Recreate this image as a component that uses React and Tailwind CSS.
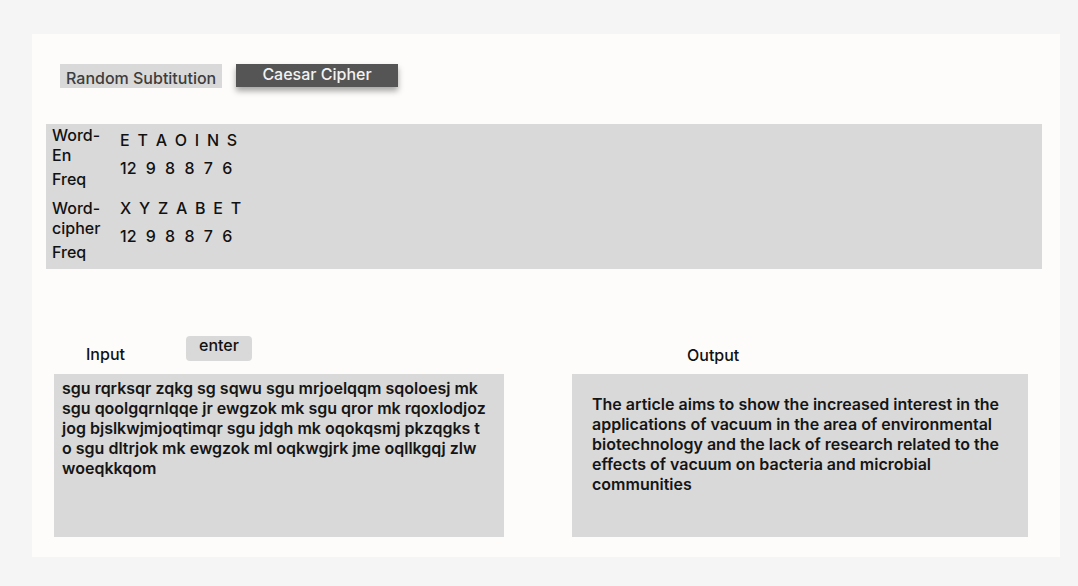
export default function App() {
  return (
    <div className="min-h-[586px] bg-[#f5f5f5] pt-[34px] pl-[32px]" style={{ fontFamily: "Inter, 'Noto Sans', sans-serif" }}>
      <div className="w-[1028px] h-[523px] bg-[#fdfcfb] pt-[30px]">
        {/* Tabs */}
        <div className="flex items-start pl-[28px] gap-[14px]">
          <div className="w-[162px] h-[24px] bg-[#d9d9d9] text-[16px] font-medium text-[#3d3d3d] pl-[6px] pt-[4px] leading-[20px] whitespace-nowrap">
            Random Subtitution
          </div>
          <div className="w-[162px] h-[23px] bg-[#555555] text-[16px] font-medium text-[#f2f2f2] text-center leading-[20px] shadow-[0_4px_6px_rgba(0,0,0,0.35)]">
            Caesar Cipher
          </div>
        </div>

        {/* Frequency table */}
        <div className="ml-[14px] mt-[36px] w-[996px] h-[145px] bg-[#d9d9d9] pl-[6px] pt-[1px] text-[16px] font-medium text-[#111] leading-[20px]">
          <FreqRow label={["Word-", "En"]} letters="E T A O I N S" valuesTop="pt-[5px]" />
          <FreqRow label={["Word-", "cipher"]} letters="X Y Z A B E T" valuesTop="pt-[0px]" className="mt-[9px]" />
        </div>

        {/* Input / Output */}
        <div className="flex mt-[64px] pl-[22px]">
          <div className="w-[450px]">
            <div className="flex items-start h-[41px]">
              <span className="ml-[32px] mt-[11px] text-[16px] font-medium text-[#111] leading-[20px]">Input</span>
              <button className="ml-[61px] mt-[3px] w-[66px] h-[25px] rounded-[4px] bg-[#d9d9d9] text-[16px] font-medium text-[#111] leading-[18px] pb-[7px]">
                enter
              </button>
            </div>
            <div className="h-[163px] bg-[#d9d9d9] pl-[8px] pr-[15px] pt-[4px] text-[16px] font-semibold text-[#151515] leading-[20px]">
              sgu rqrksqr zqkg sg sqwu sgu mrjoelqqm sqoloesj mk sgu qoolgqrnlqqe jr ewgzok mk sgu qror mk rqoxlodjoz jog bjslkwjmjoqtimqr sgu jdgh mk oqokqsmj pkzqgks t o sgu dltrjok mk ewgzok ml oqkwgjrk jme oqllkgqj zlw woeqkkqom
            </div>
          </div>
          <div className="w-[456px] ml-[68px]">
            <div className="h-[41px] pt-[12px] pl-[115px] text-[16px] font-medium text-[#111] leading-[20px]">Output</div>
            <div className="h-[163px] bg-[#d9d9d9] pl-[20px] pr-[16px] pt-[20px] text-[16px] font-semibold text-[#151515] leading-[20px]">
              The article aims to show the increased interest in the applications of vacuum in the area of environmental biotechnology and the lack of research related to the effects of vacuum on bacteria and microbial communities
            </div>
          </div>
        </div>
      </div>
    </div>
  );
}

function FreqRow({ label, letters, valuesTop, className = "" }) {
  return (
    <div className={"flex " + className}>
      <div className="w-[68px]">
        <div>{label[0]}</div>
        <div>{label[1]}</div>
        <div className="mt-[4px]">Freq</div>
      </div>
      <div className={valuesTop}>
        <div className="tracking-[1px] [word-spacing:1.5px]">{letters}</div>
        <div className="mt-[8px] [word-spacing:5px]">12 9 8 8 7 6</div>
      </div>
    </div>
  );
}
